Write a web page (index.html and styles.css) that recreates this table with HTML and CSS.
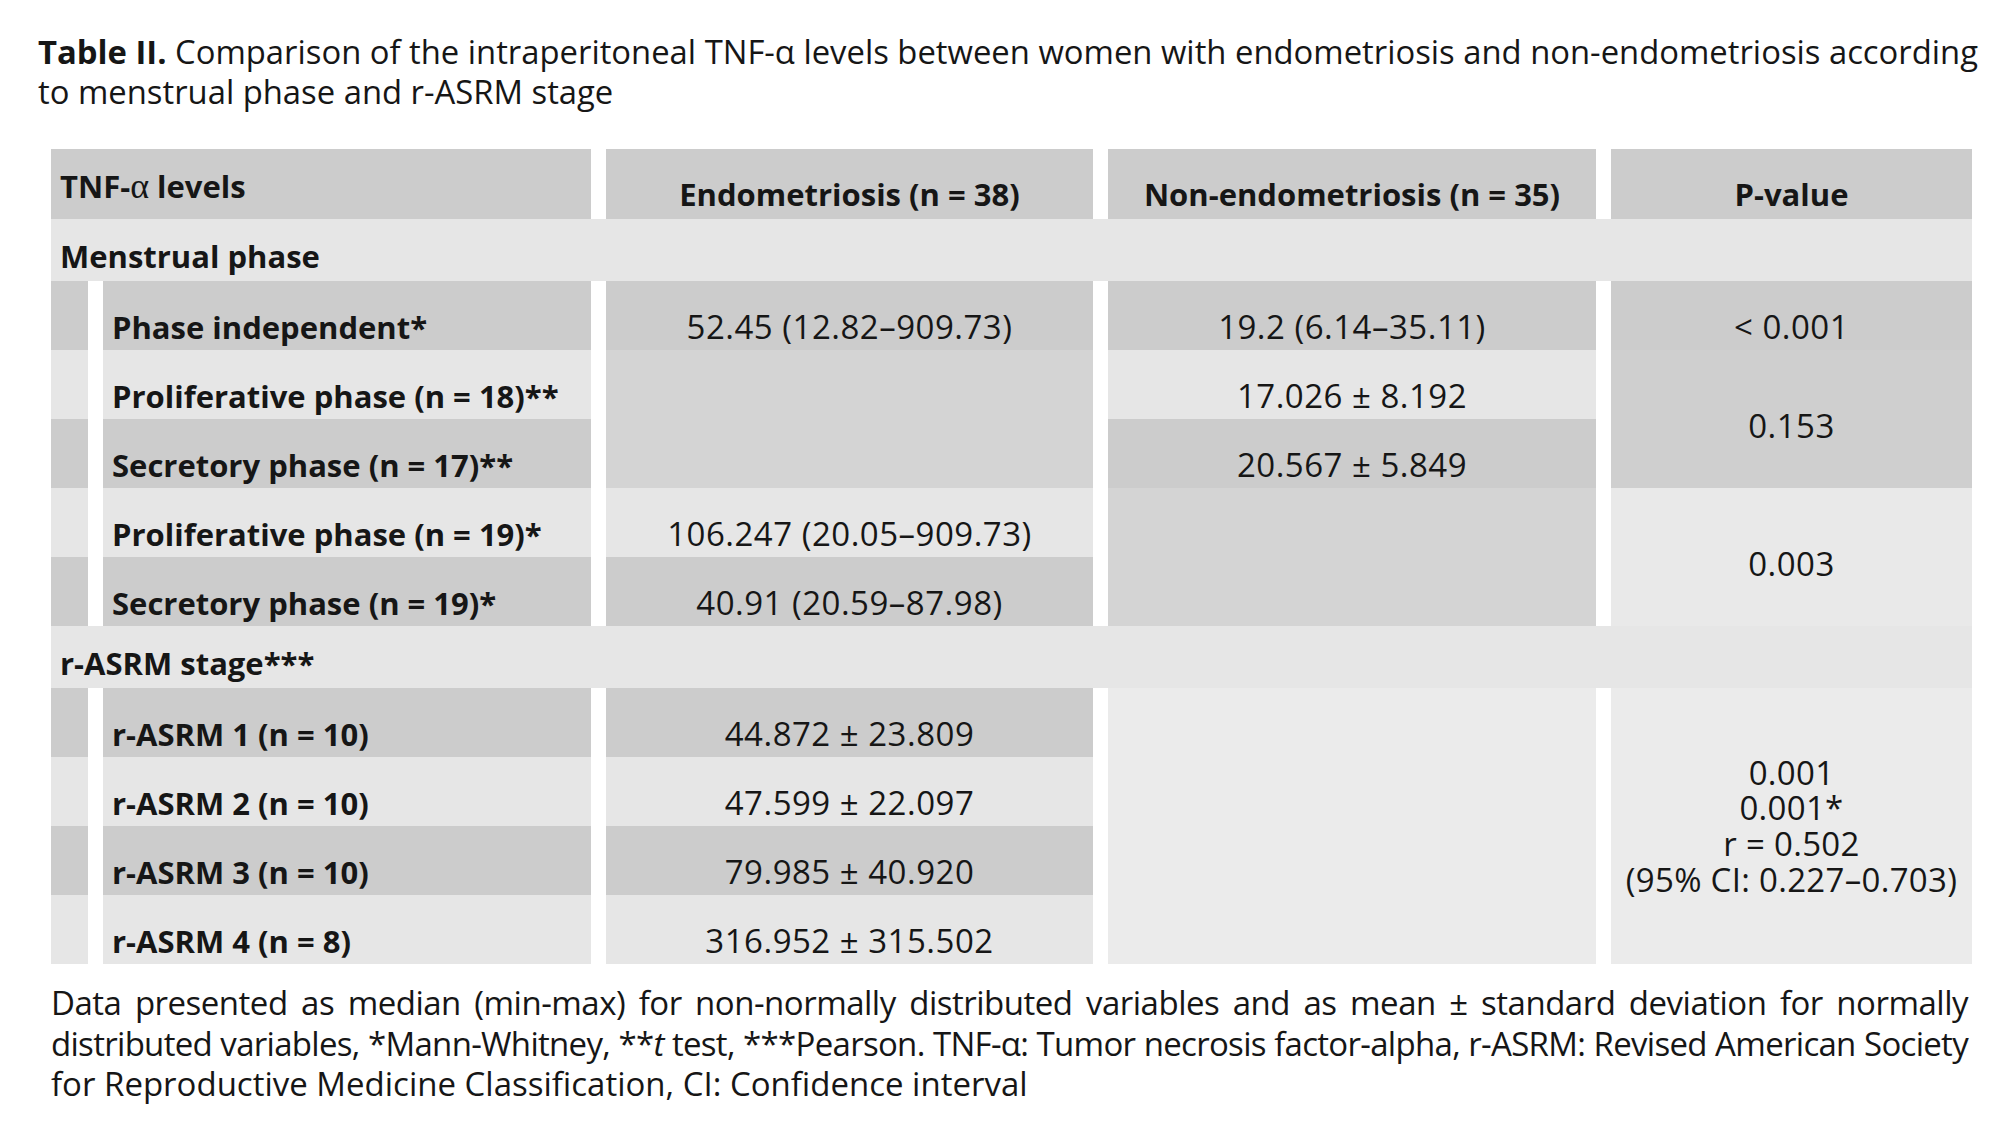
FILE: index.html
```html
<!DOCTYPE html>
<html lang="en">
<head>
<meta charset="utf-8">
<title>Table II</title>
<link rel="stylesheet" href="styles.css">
</head>
<body>
<div class="page">
  <p class="caption">
    <span class="cap-line"><b>Table II.</b> Comparison of the intraperitoneal TNF-α levels between women with endometriosis and non-endometriosis according</span>
    <span class="cap-line">to menstrual phase and r-ASRM stage</span>
  </p>

  <div class="table">
    <div class="th th-first"><span>TNF-<span class="alpha">α</span> levels</span></div>
    <div class="th">Endometriosis (n = 38)</div>
    <div class="th">Non-endometriosis (n = 35)</div>
    <div class="th">P-value</div>

    <div class="section">Menstrual phase</div>

    <div class="ind dark"></div>
    <div class="lbl dark">Phase independent*</div>
    <div class="val dark">52.45 (12.82–909.73)</div>
    <div class="val dark">19.2 (6.14–35.11)</div>
    <div class="val dark">&lt; 0.001</div>

    <div class="ind light"></div>
    <div class="lbl light">Proliferative phase (n = 18)**</div>
    <div class="merge2 mid"></div>
    <div class="val light">17.026 ± 8.192</div>
    <div class="merge2 pdark">0.153</div>

    <div class="ind dark"></div>
    <div class="lbl dark">Secretory phase (n = 17)**</div>
    <div class="val dark">20.567 ± 5.849</div>

    <div class="ind light"></div>
    <div class="lbl light">Proliferative phase (n = 19)*</div>
    <div class="val light">106.247 (20.05–909.73)</div>
    <div class="merge2 mid"></div>
    <div class="merge2 plight">0.003</div>

    <div class="ind dark"></div>
    <div class="lbl dark">Secretory phase (n = 19)*</div>
    <div class="val dark">40.91 (20.59–87.98)</div>

    <div class="section">r-ASRM stage***</div>

    <div class="ind dark"></div>
    <div class="lbl dark">r-ASRM 1 (n = 10)</div>
    <div class="val dark">44.872 ± 23.809</div>
    <div class="merge4 pale"></div>
    <div class="merge4 pale stack">
      <p class="stack-text">0.001<br>0.001*<br>r = 0.502<br>(95% CI: 0.227–0.703)</p>
    </div>

    <div class="ind light"></div>
    <div class="lbl light">r-ASRM 2 (n = 10)</div>
    <div class="val light">47.599 ± 22.097</div>

    <div class="ind dark"></div>
    <div class="lbl dark">r-ASRM 3 (n = 10)</div>
    <div class="val dark">79.985 ± 40.920</div>

    <div class="ind light"></div>
    <div class="lbl light">r-ASRM 4 (n = 8)</div>
    <div class="val light">316.952 ± 315.502</div>
  </div>

  <p class="note">
    <span class="note-line just loose">Data presented as median (min-max) for non-normally distributed variables and as mean ± standard deviation for normally</span>
    <span class="note-line just tight">distributed variables, *Mann-Whitney, **<i>t</i> test, ***Pearson. TNF-α: Tumor necrosis factor-alpha, r-ASRM: Revised American Society</span>
    <span class="note-line">for Reproductive Medicine Classification, CI: Confidence interval</span>
  </p>
</div>
</body>
</html>
```

FILE: styles.css
```css
html, body {
  margin: 0;
  padding: 0;
  background: #ffffff;
}

body {
  font-family: "Open Sans", "Liberation Sans", sans-serif;
  color: #161616;
}

.page {
  padding: 32px 0 0 38px;
}

.caption {
  margin: 0;
  font-size: 32.8px;
  line-height: 40px;
}

.cap-line {
  display: block;
  white-space: nowrap;
}

.caption b {
  font-weight: 700;
}

.table {
  display: grid;
  grid-template-columns: 37px 488px 487px 488px 361px;
  grid-template-rows: 70px 62px repeat(5, 69px) 62px repeat(4, 69px);
  column-gap: 15px;
  width: 1921px;
  margin: 37px 0 0 13px;
  font-size: 31px;
}

.th {
  background: #cccccc;
  font-weight: 700;
  display: flex;
  align-items: center;
  justify-content: center;
  padding-top: 20px;
}

.th-first {
  grid-column: span 2;
  justify-content: flex-start;
  padding-left: 9px;
  padding-top: 4px;
}

.alpha {
  font-family: "Liberation Serif", serif;
  font-weight: 400;
  font-size: 36px;
}

.section {
  grid-column: 1 / -1;
  background: #e6e6e6;
  font-weight: 700;
  display: flex;
  align-items: center;
  padding: 12px 0 0 9px;
}

.dark {
  background: #cccccc;
}

.light {
  background: #e6e6e6;
}

.mid {
  background: #d4d4d4;
}

.pdark {
  background: #cfcfcf;
}

.plight {
  background: #e9e9e9;
}

.pale {
  background: #ebebeb;
}

.lbl {
  font-weight: 700;
  display: flex;
  align-items: center;
  padding: 22px 0 0 9px;
}

.val {
  display: flex;
  align-items: center;
  justify-content: center;
  padding-top: 22px;
  font-size: 33px;
  letter-spacing: 0.5px;
}

.merge2 {
  grid-row: span 2;
  display: flex;
  align-items: center;
  justify-content: center;
  padding-top: 12px;
  font-size: 33px;
  letter-spacing: 0.5px;
}

.merge4 {
  grid-row: span 4;
}

.stack {
  display: flex;
  align-items: center;
  justify-content: center;
}

.stack-text {
  margin: 0;
  text-align: center;
  font-size: 33px;
  letter-spacing: 0.3px;
  line-height: 35.7px;
}

.note {
  margin: 19px 0 0 13px;
  width: 1917px;
  font-size: 33px;
  line-height: 40.5px;
}

.note-line {
  display: block;
}

.just {
  text-align: justify;
  text-align-last: justify;
}

.loose {
  letter-spacing: -0.5px;
}

.tight {
  letter-spacing: -0.7px;
  word-spacing: -4px;
}
```
